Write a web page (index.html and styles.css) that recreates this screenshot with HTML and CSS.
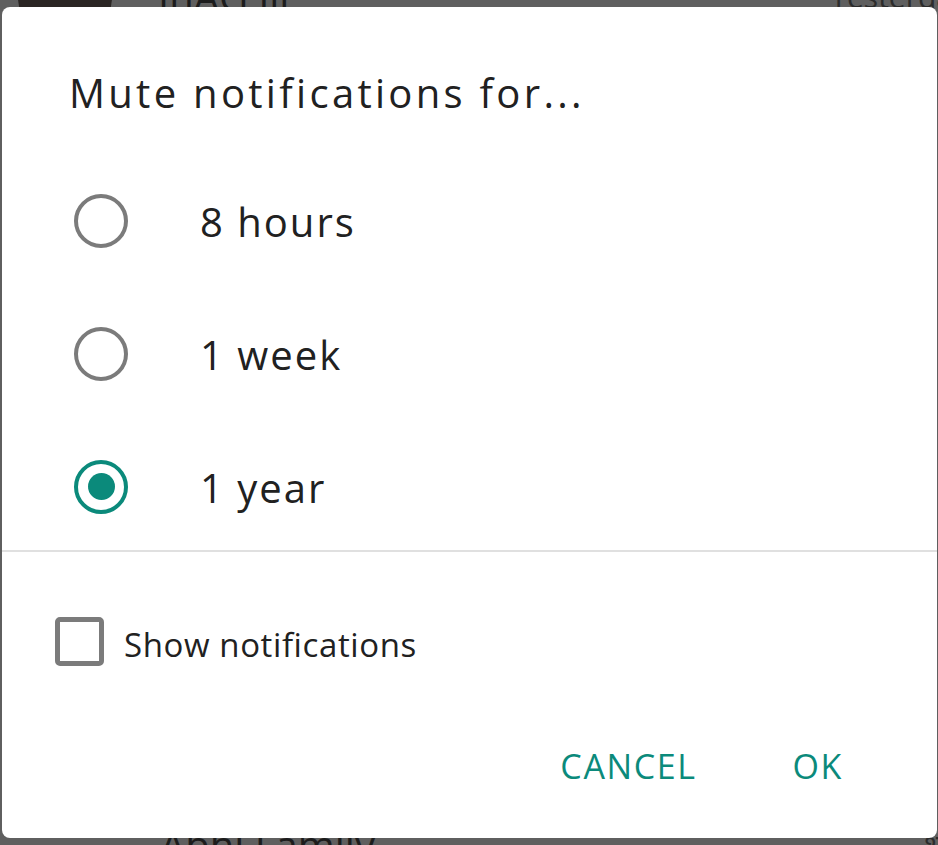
FILE: index.html
```html
<!DOCTYPE html>
<html lang="en">
<head>
<meta charset="utf-8">
<title>Mute notifications</title>
<link rel="stylesheet" href="styles.css">
</head>
<body>
<div class="screen">
  <div class="backdrop">
    <div class="chat chat-top">
      <span class="avatar"></span>
      <span class="chat-name">InAG Jil</span>
      <span class="chat-time">Yesterday</span>
    </div>
    <div class="chat chat-bottom">
      <span class="chat-name">Abhi Family</span>
      <span class="chat-time">शनि</span>
    </div>
  </div>
  <div class="dialog">
    <h1 class="title">Mute notifications for...</h1>
    <div class="options">
      <label class="option">
        <span class="radio"></span>
        <span class="option-text">8 hours</span>
      </label>
      <label class="option">
        <span class="radio"></span>
        <span class="option-text">1 week</span>
      </label>
      <label class="option">
        <span class="radio radio-on"></span>
        <span class="option-text">1 year</span>
      </label>
    </div>
    <div class="divider"></div>
    <label class="check-row">
      <span class="checkbox"></span>
      <span class="check-text">Show notifications</span>
    </label>
    <div class="actions">
      <span class="btn">CANCEL</span>
      <span class="btn">OK</span>
    </div>
  </div>
</div>
</body>
</html>
```
FILE: styles.css
```css
* { box-sizing: border-box; }
html, body {
  margin: 0;
  padding: 0;
  width: 938px;
  height: 845px;
  overflow: hidden;
  background: #5f5f5f;
  font-family: "Open Sans", "Noto Sans", sans-serif;
  color: #212121;
}
.screen {
  position: relative;
  width: 938px;
  height: 845px;
  overflow: hidden;
  padding: 7px 1px 7px 2px;
}
.backdrop {
  position: absolute;
  inset: 0;
  overflow: hidden;
  color: #1c1c1c;
}
.chat {
  position: absolute;
  left: 0;
  right: 0;
  height: 50px;
  display: flex;
  align-items: center;
  font-size: 40px;
  line-height: 50px;
}
.chat-top { top: -28px; }
.chat-bottom { top: 820px; padding-left: 160px; }
.avatar {
  width: 94px;
  height: 94px;
  border-radius: 50%;
  background: #2a2523;
  margin-left: 18px;
  flex: none;
}
.chat-name {
  margin-left: 46px;
  flex: 1;
}
.chat-bottom .chat-name { margin-left: 0; }
.chat-time {
  font-size: 30px;
  color: #2c2c2c;
  margin-right: -30px;
}
.dialog {
  position: relative;
  height: 831px;
  background: #ffffff;
  border-radius: 8px;
  padding-top: 62px;
  display: flex;
  flex-direction: column;
}
.title {
  margin: 0;
  padding-left: 67px;
  font-size: 40px;
  line-height: 48px;
  font-weight: 400;
  letter-spacing: 3.3px;
  color: #212121;
}
.options {
  margin-top: 37px;
  height: 396px;
  display: grid;
  grid-template-rows: repeat(3, 133px);
}
.option {
  display: flex;
  align-items: center;
  padding-left: 72px;
}
.radio {
  width: 54px;
  height: 54px;
  border-radius: 50%;
  border: 4.5px solid #7b7b7b;
  flex: none;
  display: flex;
  align-items: center;
  justify-content: center;
}
.radio-on {
  border-color: #0b8a7b;
}
.radio-on::after {
  content: "";
  width: 27px;
  height: 27px;
  border-radius: 50%;
  background: #0b8a7b;
}
.option-text {
  margin-left: 72px;
  font-size: 40px;
  line-height: 48px;
  letter-spacing: 2px;
  margin-top: 3px;
}
.divider {
  height: 2px;
  background: #e0e0e0;
  flex: none;
}
.check-row {
  height: 178px;
  display: flex;
  align-items: center;
  padding-left: 53px;
  padding-top: 4px;
}
.checkbox {
  width: 49px;
  height: 49px;
  border: 5px solid #7b7b7b;
  border-radius: 5px;
  flex: none;
  margin-top: -4px;
}
.check-text {
  margin-left: 20px;
  font-size: 33px;
  line-height: 40px;
  letter-spacing: 0.6px;
  margin-top: 4px;
}
.actions {
  height: 72px;
  display: flex;
  justify-content: flex-end;
  align-items: center;
  gap: 96px;
  padding-right: 94px;
}
.btn {
  font-size: 34px;
  line-height: 40px;
  letter-spacing: 1.6px;
  color: #0b8a7b;
}
```
